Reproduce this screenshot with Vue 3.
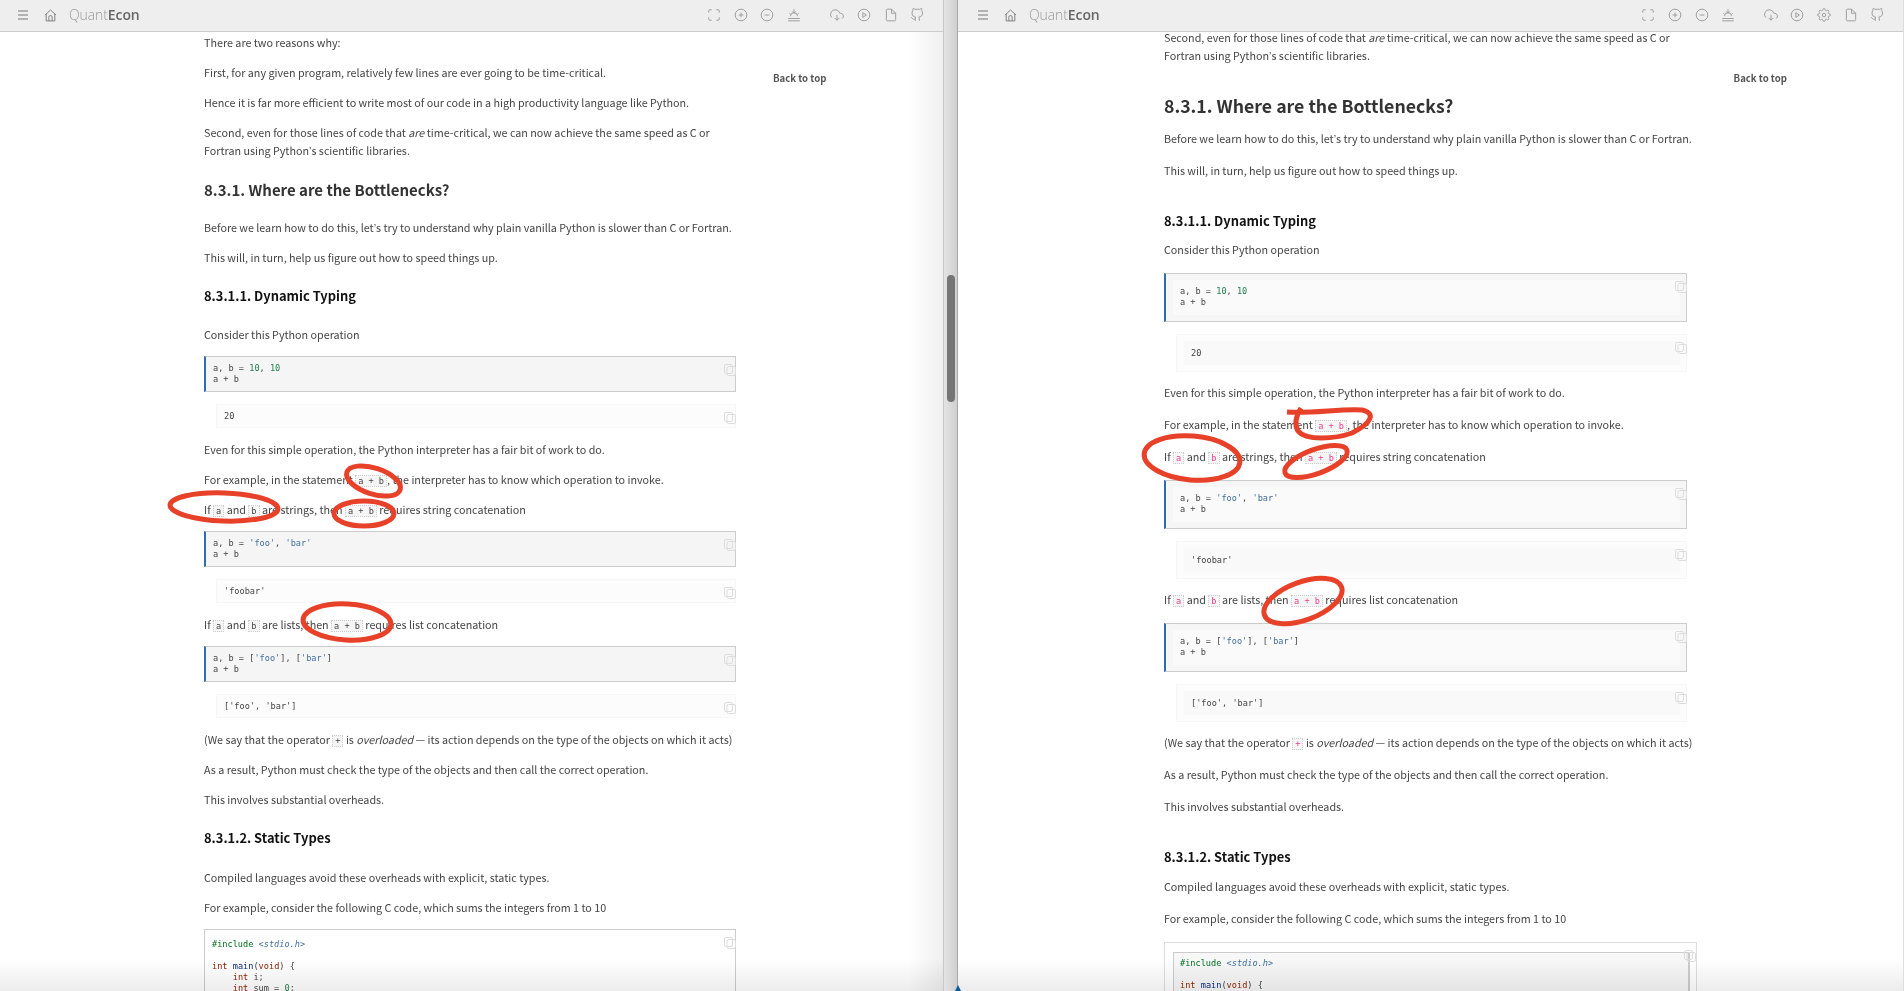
<script setup>
const c = t => ({ k: 'c', t })
const i = t => ({ k: 'i', t })
const q = () => ({ k: 'q', t: '’' })
const s = t => ({ k: '', t })
const p = (...segs) => ({ type: 'p', segs: segs.map(x => (typeof x === 'string' ? s(x) : x)) })
const h3 = t => ({ type: 'h3', t })
const h4 = t => ({ type: 'h4', t })
const code = (...lines) => ({ type: 'code', lines })
const out = t => ({ type: 'out', t })
const c1 = { type: 'ccode', lines: [
  [['#include ', 'pp'], ['<stdio.h>', 'inc']],
  [],
  [['int', 'ty'], [' '], ['main', 'fn'], ['('], ['void', 'ty'], [') {']],
  [['    '], ['int', 'ty'], [' i;']],
  [['    '], ['int', 'ty'], [' sum = '], ['0', 'num'], [';']]
] }

const second = p('Second, even for those lines of code that ', i('are'), ' time-critical, we can now achieve the same speed as C or Fortran using Python', q(), 's scientific libraries.')
const shared = [
  h3('8.3.1. Where are the Bottlenecks?'),
  p('Before we learn how to do this, let', q(), 's try to understand why plain vanilla Python is slower than C or Fortran.'),
  p('This will, in turn, help us figure out how to speed things up.'),
  h4('8.3.1.1. Dynamic Typing'),
  p('Consider this Python operation'),
  code([['a, b = '], ['10', 'num'], [', '], ['10', 'num']], [['a + b']]),
  out('20'),
  p('Even for this simple operation, the Python interpreter has a fair bit of work to do.'),
  p('For example, in the statement ', c('a + b'), ', the interpreter has to know which operation to invoke.'),
  p('If ', c('a'), ' and ', c('b'), ' are strings, then ', c('a + b'), ' requires string concatenation'),
  code([['a, b = '], ["'foo'", 'str'], [', '], ["'bar'", 'str']], [['a + b']]),
  out("'foobar'"),
  p('If ', c('a'), ' and ', c('b'), ' are lists, then ', c('a + b'), ' requires list concatenation'),
  code([['a, b = ['], ["'foo'", 'str'], ['], ['], ["'bar'", 'str'], [']']], [['a + b']]),
  out("['foo', 'bar']"),
  p('(We say that the operator ', c('+'), ' is ', i('overloaded'), ' — its action depends on the type of the objects on which it acts)'),
  p('As a result, Python must check the type of the objects and then call the correct operation.'),
  p('This involves substantial overheads.'),
  h4('8.3.1.2. Static Types'),
  p('Compiled languages avoid these overheads with explicit, static types.'),
  p('For example, consider the following C code, which sums the integers from 1 to 10'),
  c1
]

const panes = [
  {
    id: 'left',
    gear: false,
    blocks: [
      p('There are two reasons why:'),
      p('First, for any given program, relatively few lines are ever going to be time-critical.'),
      p('Hence it is far more efficient to write most of our code in a high productivity language like Python.'),
      second,
      ...shared
    ]
  },
  { id: 'right', gear: true, blocks: [second, ...shared] }
]

const gear = 'M19.4 15a1.65 1.65 0 0 0 .33 1.82l.06.06a2 2 0 0 1 0 2.83 2 2 0 0 1-2.83 0l-.06-.06a1.65 1.65 0 0 0-1.82-.33 1.65 1.65 0 0 0-1 1.51V21a2 2 0 0 1-2 2 2 2 0 0 1-2-2v-.09A1.65 1.65 0 0 0 9 19.4a1.65 1.65 0 0 0-1.82.33l-.06.06a2 2 0 0 1-2.83 0 2 2 0 0 1 0-2.83l.06-.06a1.65 1.65 0 0 0 .33-1.82 1.65 1.65 0 0 0-1.51-1H3a2 2 0 0 1-2-2 2 2 0 0 1 2-2h.09A1.65 1.65 0 0 0 4.6 9a1.65 1.65 0 0 0-.33-1.82l-.06-.06a2 2 0 0 1 0-2.83 2 2 0 0 1 2.83 0l.06.06a1.65 1.65 0 0 0 1.82.33H9a1.65 1.65 0 0 0 1-1.51V3a2 2 0 0 1 2-2 2 2 0 0 1 2 2v.09a1.65 1.65 0 0 0 1 1.51 1.65 1.65 0 0 0 1.82-.33l.06-.06a2 2 0 0 1 2.83 0 2 2 0 0 1 0 2.83l-.06.06a1.65 1.65 0 0 0-.33 1.82V9a1.65 1.65 0 0 0 1.51 1H21a2 2 0 0 1 2 2 2 2 0 0 1-2 2h-.09a1.65 1.65 0 0 0-1.51 1zM15 12a3 3 0 1 1-6 0 3 3 0 0 1 6 0z'
const toolsA = [
  'M3 8V5a2 2 0 0 1 2-2h3M16 3h3a2 2 0 0 1 2 2v3M21 16v3a2 2 0 0 1-2 2h-3M8 21H5a2 2 0 0 1-2-2v-3',
  'M22 12a10 10 0 1 1-20 0 10 10 0 0 1 20 0zM12 8v8M8 12h8',
  'M22 12a10 10 0 1 1-20 0 10 10 0 0 1 20 0zM8 12h8',
  'M2 22h20M2 18h20M6 14a6 6 0 0 1 12 0M12 2v6M9 6l3 3 3-3M4 9l2 2M20 9l-2 2'
]
const toolsB = [
  'M8 17l4 4 4-4M12 12v9M20.88 18.09A5 5 0 0 0 18 9h-1.26A8 8 0 1 0 3 16.29',
  'M22 12a10 10 0 1 1-20 0 10 10 0 0 1 20 0zM10 8l6 4-6 4z'
]
const toolsC = [
  'M13 2H6a2 2 0 0 0-2 2v16a2 2 0 0 0 2 2h12a2 2 0 0 0 2-2V9zM13 2v7h7',
  'M9 19c-5 1.5-5-2.5-7-3m14 6v-3.87a3.37 3.37 0 0 0-.94-2.61c3.14-.35 6.44-1.54 6.44-7A5.44 5.44 0 0 0 20 4.77 5.07 5.07 0 0 0 19.91 1S18.73.65 16 2.48a13.38 13.38 0 0 0-7 0C6.27.65 5.09 1 5.09 1A5.07 5.07 0 0 0 5 4.77a5.44 5.44 0 0 0-1.5 3.78c0 5.42 3.3 6.61 6.44 7A3.37 3.37 0 0 0 9 18.13V22'
]
const toolsFor = pane => ({ first: toolsA, second: pane.gear ? [...toolsB, gear, ...toolsC] : [...toolsB, ...toolsC] })

const rings = [
  { cx: 373.5, cy: 481, rx: 28, ry: 13, r: 18 },
  { cx: 224, cy: 507, rx: 54, ry: 14, r: 2 },
  { cx: 364, cy: 513.5, rx: 30, ry: 12.5, r: 0 },
  { cx: 347, cy: 622, rx: 44, ry: 18, r: 3 },
  { cx: 1192, cy: 458, rx: 48, ry: 22, r: 5 },
  { cx: 1316, cy: 461.5, rx: 33, ry: 12, r: -20 },
  { cx: 1303, cy: 601, rx: 41, ry: 19, r: -20 }
]
</script>

<template>
  <div class="page">
    <template v-for="(pane, n) in panes" :key="pane.id">
      <section class="pane" :class="pane.id">
        <header class="bar">
          <svg class="burger" viewBox="0 0 10 10"><path d="M0 1h10M0 5h10M0 9h10" /></svg>
          <svg class="home" viewBox="0 0 24 24"><path d="M2 11 12 2l10 9M4 9v13h16V9M9 22v-7a3 3 0 0 1 6 0v7" /></svg>
          <span class="brand">Quant<b>Econ</b></span>
          <div class="tools">
            <div class="group">
              <span v-for="d in toolsFor(pane).first" :key="d" class="tool"><svg viewBox="0 0 24 24"><path :d="d" /></svg></span>
            </div>
            <div class="group">
              <span v-for="d in toolsFor(pane).second" :key="d" class="tool"><svg viewBox="0 0 24 24"><path :d="d" /></svg></span>
            </div>
          </div>
        </header>
        <div class="body">
          <article class="doc">
            <template v-for="(b, bi) in pane.blocks" :key="bi">
              <p v-if="b.type === 'p'"><span v-for="(seg, si) in b.segs" :key="si" :class="seg.k">{{ seg.t }}</span></p>
              <h3 v-else-if="b.type === 'h3'">{{ b.t }}</h3>
              <h4 v-else-if="b.type === 'h4'">{{ b.t }}</h4>
              <div v-else-if="b.type === 'out'" class="out">
                <div class="inner"><pre>{{ b.t }}</pre></div>
                <svg class="copy" viewBox="0 0 12 12"><rect x=".5" y=".5" width="8" height="9" rx="1.5" /><rect x="3" y="2.5" width="8.5" height="9" rx="1.5" /></svg>
              </div>
              <div v-else class="cell" :class="b.type">
                <div class="inner">
                  <pre><div v-for="(ln, li) in b.lines" :key="li" class="ln"><span v-for="(tok, ti) in ln" :key="ti" :class="tok[1]">{{ tok[0] }}</span></div></pre>
                </div>
                <svg class="copy" viewBox="0 0 12 12"><rect x=".5" y=".5" width="8" height="9" rx="1.5" /><rect x="3" y="2.5" width="8.5" height="9" rx="1.5" /></svg>
              </div>
            </template>
          </article>
          <aside class="aside">Back to top</aside>
        </div>
        <div class="fade"></div>
      </section>
      <div v-if="n === 0" class="gutter"><div class="thumb"></div></div>
    </template>
    <div class="notch"></div>
    <svg class="marks" viewBox="0 0 1904 991">
      <ellipse v-for="m in rings" :key="m.cx" :cx="m.cx" :cy="m.cy" :rx="m.rx" :ry="m.ry" :transform="`rotate(${m.r} ${m.cx} ${m.cy})`" />
      <path d="M1287 412C1310 414 1345 408 1362 410 1376 413 1372 423 1352 433 1335 439 1306 441 1298 431 1294 424 1296 416 1301 408" />
    </svg>
  </div>
</template>

<style>
html, body { margin: 0; background: #fff; overflow: hidden; }
</style>

<style scoped>
.page {
  position: relative;
  display: flex;
  width: 1904px;
  height: 991px;
  overflow: hidden;
  font-family: "Noto Sans CJK SC", "Noto Sans", sans-serif;
  font-size: 10.75px;
  line-height: 18px;
  color: #444;
}
.q { font-family: "Liberation Sans", sans-serif; line-height: 1; }
.pane { position: relative; height: 991px; overflow: hidden; background: #fff; }
.left { width: 943px; }
.left::after {
  content: "";
  position: absolute;
  top: 32px;
  right: 0;
  bottom: 0;
  width: 34px;
  background: linear-gradient(to right, rgba(238, 238, 238, 0), #efefef);
}
.right { flex: 1; border-right: 1px solid #ddd; }
.gutter {
  height: 991px;
  flex: none;
  background: linear-gradient(to right, #e4e4e4, #cfcfcf);
  border-left: 1px solid #c8c8c8;
  border-right: 1px solid #a8a8a8;
  box-sizing: border-box;
  width: 15px;
  padding: 275px 2px 0 3px;
}
.thumb { height: 127px; border-radius: 4px; background: #757575; }
.notch {
  position: absolute;
  left: 955px;
  top: 985px;
  width: 0;
  height: 0;
  border-left: 3px solid transparent;
  border-right: 3px solid transparent;
  border-bottom: 6px solid #0a5f9c;
}
.bar {
  display: flex;
  align-items: center;
  height: 30px;
  padding-bottom: 1px;
  background: #eee;
  border-bottom: 1px solid #ccc;
  position: relative;
  z-index: 2;
}
.right .bar { padding-left: 2px; }
.burger { width: 10px; height: 10px; margin-left: 18px; fill: none; stroke: #777; stroke-width: 1; flex: none; }
.home { width: 13px; height: 13px; margin-left: 16px; fill: none; stroke: #777; stroke-width: 1.7; flex: none; }
.brand { margin-left: 12px; font-family: "Open Sans", sans-serif; font-size: 14px; color: #999; font-weight: 300; letter-spacing: -.1px; }
.brand b { font-weight: 600; color: #666; }
.tools { margin-left: auto; display: flex; gap: 17px; padding-right: 12.5px; }
.right .tools { gap: 16px; }
.group { display: flex; }
.tool { width: 26.6px; height: 16px; display: flex; justify-content: center; align-items: center; }
.tool svg { width: 14px; height: 14px; fill: none; stroke: #999; stroke-width: 1.6; }
.body { display: flex; align-items: flex-start; }
.left .body { padding-left: 204px; }
.right .body { padding-left: 206px; }
.doc { flex: none; width: 532px; }
.right .doc { width: 538px; }
.aside { font-size: 9.6px; font-weight: 700; color: #555; line-height: 12px; white-space: nowrap; padding-top: 40px; }
.left .aside { margin-left: 37px; }
.right .aside { margin-left: 31.6px; }
p { margin: 0 0 12px; }
.left p:first-child { margin-top: 2px; }
.right p:first-child { margin-top: -3px; }
.i { font-style: italic; }
.c {
  font-family: "DejaVu Sans Mono", monospace;
  font-size: 8.6px;
  line-height: 1;
  background: #f5f5f5;
  border: 1px dotted #ccc;
  padding: 0 2px;
}
.right .c { color: #e83e8c; }
h3, h4 { margin: 0; font-weight: 700; }
h3 { color: #333; font-size: 15px; line-height: 22px; margin: 19px 0 18px; }
.right h3 { font-size: 17.7px; line-height: 26px; margin: 27px 0 12px; }
h4 { color: #111; font-size: 12.9px; line-height: 18px; margin: 20px 0 21px; }
.left h4:last-of-type { margin-bottom: 22px; }
.right h4 { margin: 32px 0 11px; }
.right h4:last-of-type { margin-bottom: 12px; }
pre { margin: 0; font-family: "DejaVu Sans Mono", monospace; font-size: 8.6px; line-height: 11px; white-space: pre; }
.ln { height: 11px; }
.cell, .out { position: relative; box-sizing: border-box; }
.cell { margin-bottom: 12px; background: #f5f5f5; border: 1px solid #ccc; border-left: 2px solid #2f6db0; }
.cell .inner { padding: 6px 6px 6px 7px; }
.out { margin: 0 0 13px 12px; background: #fcfcfc; border: 1px solid #f6f6f6; }
.out .inner { padding: 6px 7px; height: 22px; box-sizing: border-box; }
.right p { margin-bottom: 14px; }
.right .cell { width: 522.5px; padding: 6px 6px 6px 7px; background: #f6f6f6; }
.right .cell .inner { padding: 6px 7px 4px; background: #fafafa; height: 35px; box-sizing: border-box; }
.right .out { width: 510.5px; padding: 6px 6px 6px 7px; margin-bottom: 12px; }
.right .out .inner { background: #f9f9f9; height: 24px; padding: 7px 7px 6px; }
.ccode { margin: 0; background: #fff; border: 1px solid #ccc; height: 120px; }
.ccode .inner { padding: 9px 7px; }
.right .ccode {
  width: 533px;
  margin-top: 14px;
  border: 1px solid #ddd;
  padding: 9px 6px 0 8px;
  background: #fff;
}
.right .ccode .inner { background: #f7f7f7; height: 110px; border: 1px solid #ccc; border-right-width: 2px; padding: 5px 6px; }
.copy { position: absolute; right: -1px; top: 7px; width: 12px; height: 12px; fill: none; stroke: #ddd; stroke-width: 1; }
.right .ccode .copy { right: 0; }
.num { color: #208050; }
.str { color: #4070a0; }
.pp { color: #007020; }
.inc { color: #4070a0; font-style: italic; }
.ty { color: #902000; }
.fn { color: #06287e; }
.fade {
  position: absolute;
  left: 0;
  right: 0;
  bottom: 0;
  height: 32px;
  background: linear-gradient(to bottom, #fff, #ececec);
  mix-blend-mode: multiply;
  pointer-events: none;
  z-index: 1;
}
.marks { position: absolute; inset: 0; width: 1904px; height: 991px; fill: none; stroke: #e8412a; stroke-width: 5; pointer-events: none; z-index: 3; }
</style>
